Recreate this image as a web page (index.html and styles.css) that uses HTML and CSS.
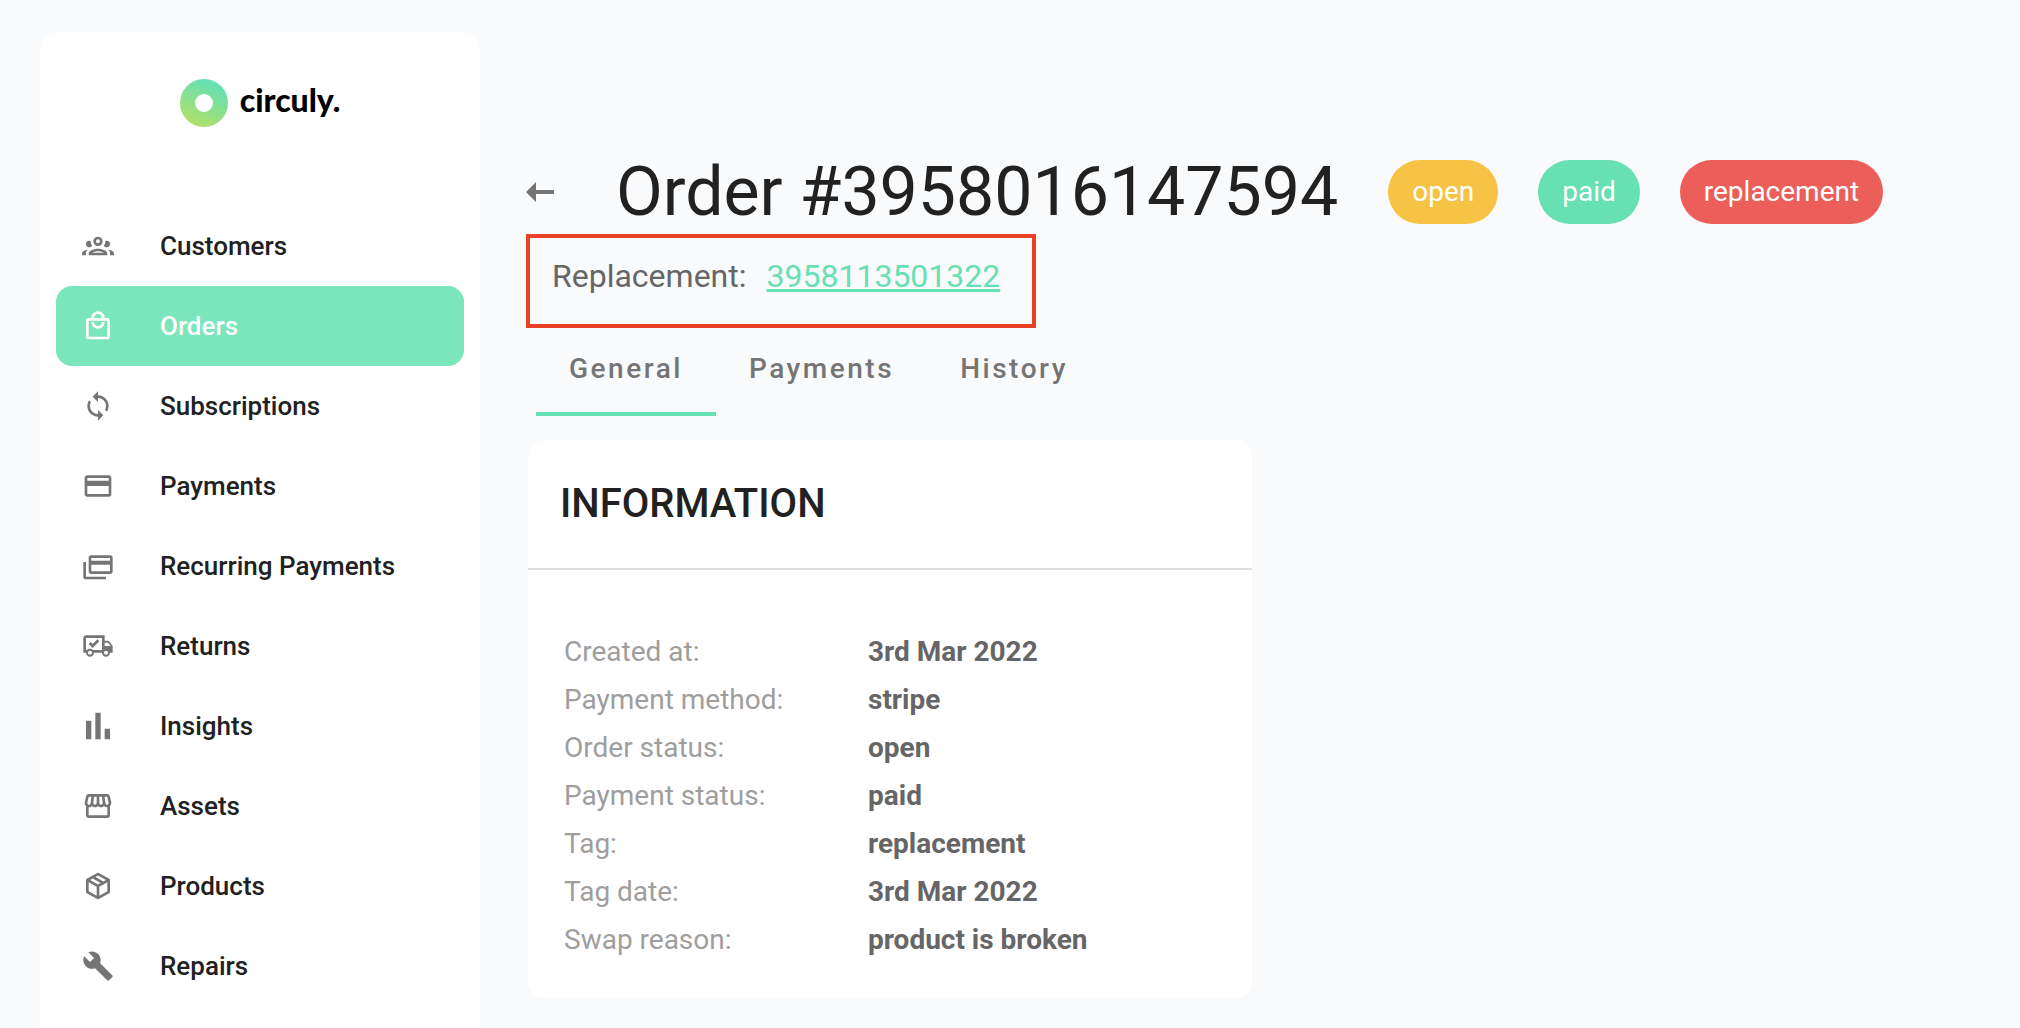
FILE: index.html
```html
<!DOCTYPE html>
<html lang="en">
<head>
  <meta charset="UTF-8">
  <meta name="viewport" content="width=device-width, initial-scale=1.0">
  <title>Order #3958016147594 - circuly.</title>
  <link rel="stylesheet" href="styles.css">
</head>
<body>
  <!-- Sidebar -->
  <aside class="sidebar">
    <a class="logo" href="#">
      <svg viewBox="0 0 48 48">
        <defs>
          <linearGradient id="ring" gradientUnits="userSpaceOnUse" x1="34" y1="6" x2="16" y2="47">
            <stop offset="0" stop-color="#67e0b3"/>
            <stop offset="1" stop-color="#b0e068"/>
          </linearGradient>
        </defs>
        <circle cx="24" cy="24" r="16.5" fill="none" stroke="url(#ring)" stroke-width="15"/>
      </svg>
      <span>circuly.</span>
    </a>

    <nav class="menu">
      <a href="#">
        <svg viewBox="0 0 24 24"><path d="M12 5a3.500 3.500 0 0 0-3.500 3.500A3.500 3.500 0 0 0 12 12a3.500 3.500 0 0 0 3.500-3.500A3.500 3.500 0 0 0 12 5m0 2a1.500 1.500 0 0 1 1.500 1.500A1.500 1.500 0 0 1 12 10a1.500 1.500 0 0 1-1.500-1.500A1.500 1.500 0 0 1 12 7M5.500 8A2.500 2.500 0 0 0 3 10.500c0 .94.53 1.750 1.290 2.180.36.200.77.320 1.210.320s.85-.12 1.210-.32c.37-.21.68-.51.91-.87A5.420 5.420 0 0 1 6.500 8.500v-.28c-.3-.14-.64-.22-1-.22m13 0c-.36 0-.7.080-1 .22v.28c0 1.200-.39 2.360-1.120 3.310.12.190.25.340.400.490.16.150.32.280.51.380.36.200.77.320 1.210.320s.85-.12 1.210-.32c.76-.43 1.290-1.240 1.290-2.180A2.500 2.500 0 0 0 18.500 8M12 14c-2.340 0-7 1.170-7 3.500V19h14v-1.500c0-2.330-4.660-3.500-7-3.500m-7.290.55C2.780 14.780 0 15.760 0 17.500V19h3v-1.930c0-1.010.69-1.850 1.710-2.520m14.580 0c1.020.67 1.710 1.510 1.710 2.520V19h3v-1.500c0-1.740-2.780-2.720-4.710-2.950M12 16c1.530 0 3.240.5 4.230 1H7.770c.99-.5 2.700-1 4.230-1z"/></svg>
        <span>Customers</span>
      </a>
      <a href="#" class="active">
        <svg viewBox="0 0 24 24"><path d="M19 6h-2c0-2.760-2.240-5-5-5S7 3.240 7 6H5c-1.100 0-2 .9-2 2v12c0 1.100.9 2 2 2h14c1.100 0 2-.9 2-2V8c0-1.100-.9-2-2-2zm-7-3c1.660 0 3 1.340 3 3H9c0-1.660 1.340-3 3-3zm7 17H5V8h14v12zm-7-8c-1.660 0-3-1.340-3-3H7c0 2.760 2.240 5 5 5s5-2.240 5-5h-2c0 1.660-1.340 3-3 3z"/></svg>
        <span>Orders</span>
      </a>
      <a href="#">
        <svg viewBox="0 0 24 24"><path d="M12 18a6 6 0 0 1-6-6c0-1 .25-1.970.7-2.800L5.240 7.740A7.930 7.930 0 0 0 4 12a8 8 0 0 0 8 8v3l4-4-4-4m0-11V1L8 5l4 4V6a6 6 0 0 1 6 6c0 1-.25 1.970-.7 2.800l1.460 1.460A7.930 7.930 0 0 0 20 12a8 8 0 0 0-8-8z"/></svg>
        <span>Subscriptions</span>
      </a>
      <a href="#">
        <svg viewBox="0 0 24 24"><path d="M20 4H4c-1.110 0-2 .89-2 2v12a2 2 0 0 0 2 2h16a2 2 0 0 0 2-2V6c0-1.110-.89-2-2-2m0 14H4v-6h16v6m0-10H4V6h16v2z"/></svg>
        <span>Payments</span>
      </a>
      <a href="#">
        <svg viewBox="0 0 24 24"><path d="M21 4H7a2 2 0 0 0-2 2v10a2 2 0 0 0 2 2h14a2 2 0 0 0 2-2V6a2 2 0 0 0-2-2m0 12H7v-5h14v5m0-8H7V6h14v2M3 20h15v2H3a2 2 0 0 1-2-2V9h2v11z"/></svg>
        <span>Recurring Payments</span>
      </a>
      <a href="#">
        <svg viewBox="0 0 24 24"><path d="M18 18.500c.83 0 1.500-.67 1.500-1.500s-.67-1.500-1.500-1.500-1.500.67-1.500 1.500.67 1.500 1.500 1.500m1.500-9H17V12h4.460L19.500 9.500M6 18.500c.83 0 1.500-.67 1.500-1.500s-.67-1.500-1.500-1.500-1.500.67-1.500 1.500.67 1.500 1.500 1.500M20 8l3 4v5h-2c0 1.660-1.340 3-3 3s-3-1.340-3-3H9c0 1.660-1.340 3-3 3s-3-1.340-3-3H1V6c0-1.110.89-2 2-2h14v4h3M3 6v9h.76c.55-.61 1.350-1 2.240-1 .89 0 1.690.39 2.240 1H15V6H3m2 4.500L6.500 9 8 10.500 11.500 7 13 8.500l-5 5-3-3z"/></svg>
        <span>Returns</span>
      </a>
      <a href="#">
        <svg viewBox="0 0 24 24"><path d="M3 22V8h4v14H3m7 0V2h4v20h-4m7 0v-8h4v8h-4z"/></svg>
        <span>Insights</span>
      </a>
      <a href="#">
        <svg viewBox="0 0 24 24"><path d="M21.900 8.890l-1.050-4.370c-.22-.9-1-1.520-1.910-1.520H5.050c-.9 0-1.690.63-1.900 1.520L2.100 8.890c-.24 1.020-.02 2.060.62 2.880.08.110.19.190.28.290V19c0 1.100.9 2 2 2h14c1.100 0 2-.9 2-2v-6.940c.09-.09.200-.18.280-.28.640-.82.870-1.870.62-2.890zm-2.990-3.900l1.050 4.370c.1.420.01.840-.25 1.170-.14.180-.44.470-.94.470-.61 0-1.140-.49-1.210-1.140L16.980 5l1.930-.01zM13 5h1.960l.54 4.520c.05.390-.07.780-.33 1.070-.22.260-.54.410-.95.410-.67 0-1.220-.59-1.220-1.310V5zM8.490 9.520L9.040 5H11v4.690c0 .72-.55 1.310-1.290 1.310-.34 0-.65-.15-.89-.41-.25-.29-.37-.68-.33-1.070zm-4.450-.16L5.050 5h1.970l-.58 4.860c-.08.650-.6 1.140-1.210 1.140-.49 0-.8-.29-.93-.47-.27-.32-.36-.75-.26-1.170zM5 19v-6.030c.08.010.15.030.23.030.87 0 1.660-.36 2.240-.95.600.600 1.400.950 2.310.950.870 0 1.650-.36 2.230-.93.590.570 1.390.930 2.290.930.840 0 1.640-.35 2.240-.95.580.590 1.370.950 2.240.950.080 0 .15-.02.23-.03V19H5z"/></svg>
        <span>Assets</span>
      </a>
      <a href="#">
        <svg viewBox="0 0 24 24"><path d="M21 16.500c0 .38-.21.710-.53.880l-7.900 4.440c-.16.120-.36.180-.57.180s-.41-.06-.57-.18l-7.900-4.440A.991.991 0 0 1 3 16.500v-9c0-.38.210-.71.530-.88l7.900-4.440c.16-.12.360-.18.570-.18s.41.060.57.180l7.900 4.440c.32.170.53.500.53.880v9M12 4.150l-1.890 1.070L16 8.610l1.960-1.110L12 4.150M6.040 7.500L12 10.850l1.960-1.100-5.880-3.400L6.040 7.500M5 15.910l6 3.380v-6.710L5 9.210v6.700m14 0v-6.700l-6 3.370v6.710l6-3.380z"/></svg>
        <span>Products</span>
      </a>
      <a href="#">
        <svg viewBox="0 0 24 24"><path d="M22.700 19l-9.100-9.100c.9-2.300.4-5-1.500-6.900-2-2-5-2.400-7.400-1.300L9 6 6 9 1.600 4.700C.4 7.100.9 10.100 2.900 12.100c1.900 1.900 4.600 2.400 6.900 1.500l9.100 9.100c.4.400 1 .4 1.400 0l2.300-2.300c.5-.4.500-1.100.1-1.400z"/></svg>
        <span>Repairs</span>
      </a>
    </nav>
  </aside>

  <!-- Order detail -->
  <main class="content">
    <header class="order-header">
      <button class="back" type="button" aria-label="Back">
        <svg viewBox="0 0 28 20"><path d="M0 10L10 0v8h18v4H10v8z"/></svg>
      </button>
      <h1>Order #3958016147594</h1>
      <div class="badges">
        <span class="badge open">open</span>
        <span class="badge paid">paid</span>
        <span class="badge replacement">replacement</span>
      </div>
    </header>

    <div class="replacement-box">
      <span>Replacement:</span>
      <a href="#">3958113501322</a>
    </div>

    <div class="tabs" role="tablist">
      <button type="button" role="tab" class="selected" aria-selected="true">General</button>
      <button type="button" role="tab">Payments</button>
      <button type="button" role="tab">History</button>
    </div>

    <section class="card">
      <h2>INFORMATION</h2>
      <table class="info">
        <tr><th scope="row">Created at:</th><td>3rd Mar 2022</td></tr>
        <tr><th scope="row">Payment method:</th><td>stripe</td></tr>
        <tr><th scope="row">Order status:</th><td>open</td></tr>
        <tr><th scope="row">Payment status:</th><td>paid</td></tr>
        <tr><th scope="row">Tag:</th><td>replacement</td></tr>
        <tr><th scope="row">Tag date:</th><td>3rd Mar 2022</td></tr>
        <tr><th scope="row">Swap reason:</th><td>product is broken</td></tr>
      </table>
    </section>
  </main>
</body>
</html>
```

FILE: styles.css
```css
/* General */
* {
  box-sizing: border-box;
}

body {
  display: flex;
  align-items: stretch;
  min-height: 100vh;
  margin: 0;
  padding: 32px 40px 0;
  background-color: #f9fafc;
  color: #212121;
  font-family: Roboto, sans-serif;
}

a {
  text-decoration: none;
}

button {
  border: none;
  background: none;
  font-family: inherit;
  cursor: pointer;
}

/* Sidebar */
.sidebar {
  flex: 0 0 440px;
  padding: 47px 16px 0;
  background-color: #fff;
  border-radius: 16px 16px 0 0;
}

.logo {
  display: flex;
  justify-content: center;
  align-items: center;
  gap: 12px;
  height: 48px;
  margin-bottom: 79px;
  color: #000;
  font-family: Lato, sans-serif;
  font-size: 32px;
  font-weight: 900;
  line-height: 40px;
}

.logo svg {
  width: 48px;
  height: 48px;
}

.logo span {
  padding-bottom: 6px;
}

.menu a {
  display: flex;
  align-items: center;
  gap: 46px;
  height: 80px;
  padding: 0 26px;
  border-radius: 16px;
  color: #212121;
  font-size: 26px;
  font-weight: 500;
}

.menu svg {
  width: 32px;
  height: 32px;
  fill: #757575;
}

.menu a.active {
  background-color: #7be5bb;
  color: #fff;
}

.menu a.active svg {
  fill: #fff;
}

/* Order header */
.content {
  flex: 1;
  padding: 120px 0 30px 46px;
}

.order-header {
  display: flex;
  align-items: center;
  height: 80px;
}

.back {
  width: 28px;
  height: 20px;
  margin-right: 62px;
  padding: 0;
}

.back svg {
  display: block;
  fill: #757575;
}

h1 {
  margin: 0 50px 0 0;
  font-size: 68px;
  font-weight: 400;
  line-height: 80px;
  white-space: nowrap;
}

.badges {
  display: flex;
  gap: 40px;
}

.badge {
  padding: 0 24px;
  border-radius: 32px;
  color: #fff;
  font-size: 28px;
  line-height: 64px;
}

.badge.open {
  background-color: #f6c344;
}

.badge.paid {
  background-color: #67e0b3;
}

.badge.replacement {
  background-color: #ec5e59;
}

.replacement-box {
  display: flex;
  gap: 20px;
  width: fit-content;
  height: 94px;
  margin-top: 2px;
  padding: 18px 32px 0 22px;
  border: 4px solid #ea4025;
  color: #666;
  font-size: 32px;
  line-height: 40px;
}

.replacement-box a {
  color: #67e0b3;
  text-decoration: underline;
}

/* Tabs */
.tabs {
  display: flex;
  margin: 0 0 24px 10px;
}

.tabs button {
  height: 88px;
  padding: 0 33px 4px;
  border-bottom: 4px solid transparent;
  color: #757575;
  font-size: 28px;
  font-weight: 500;
  letter-spacing: 0.09em;
}

.tabs .selected {
  border-color: #67e0b3;
}

/* Information card */
.card {
  width: 724px;
  margin-left: 2px;
  padding-bottom: 34px;
  background-color: #fff;
  border-radius: 16px;
}

.card h2 {
  margin: 0 0 58px;
  padding: 40px 32px;
  border-bottom: 2px solid #e0e0e0;
  font-size: 40px;
  font-weight: 500;
  line-height: 48px;
}

.info {
  margin-left: 36px;
  border-collapse: collapse;
  font-size: 28px;
  line-height: 48px;
}

.info th {
  width: 304px;
  padding: 0;
  color: #9e9e9e;
  font-weight: 400;
  text-align: left;
}

.info td {
  padding: 0;
  color: #666;
  font-weight: 700;
}
```
